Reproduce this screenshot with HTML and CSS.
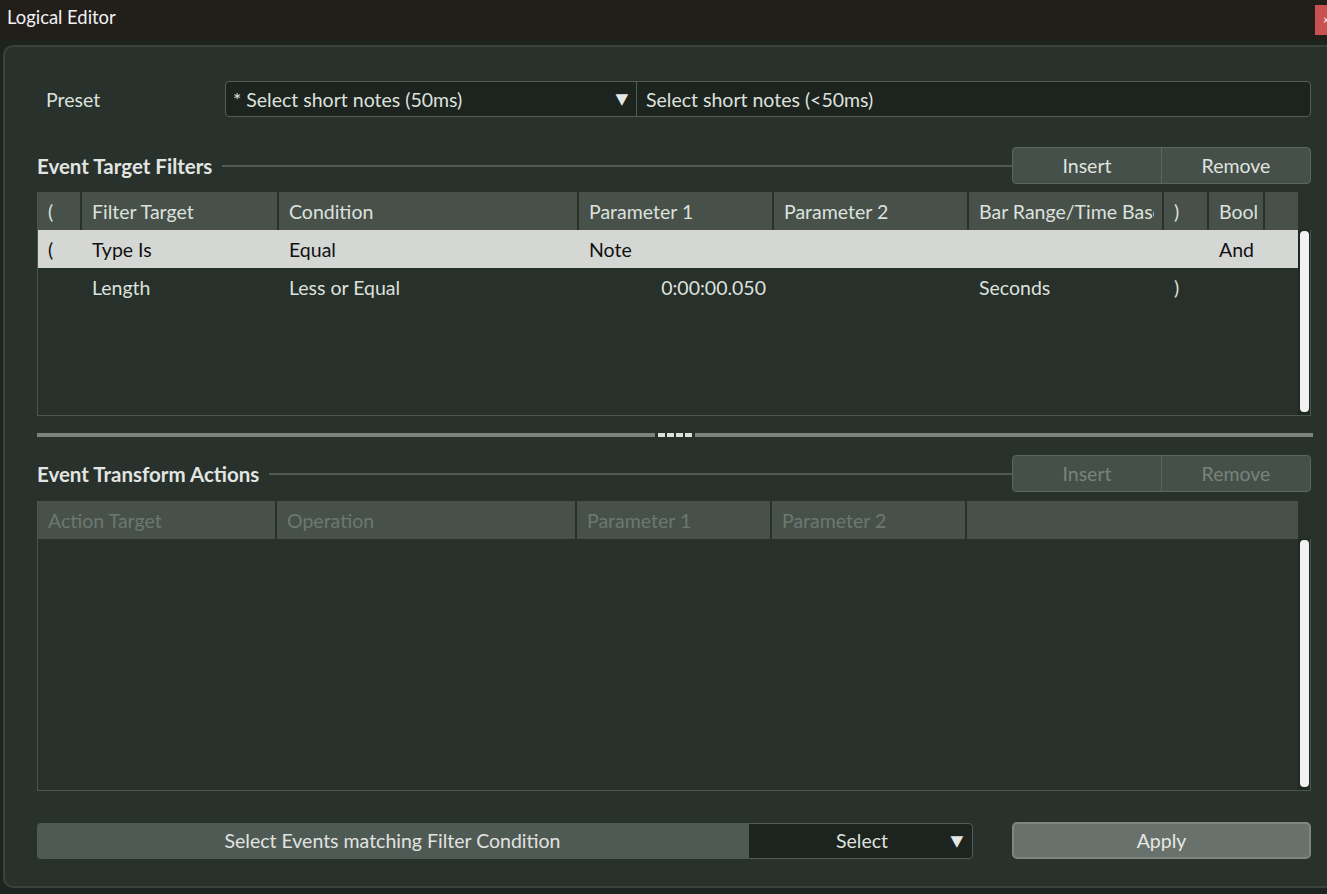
FILE: index.html
```html
<!DOCTYPE html>
<html>
<head>
<meta charset="utf-8">
<title>Logical Editor</title>
<link rel="stylesheet" href="styles.css">
</head>
<body>
<div class="titlebar">
  <span class="title">Logical Editor</span>
  <span class="close">×</span>
</div>
<div class="panel">
  <div class="content">
    <div class="preset-row">
      <span class="preset-label">Preset</span>
      <div class="combo">
        <div class="combo-main"><span>* Select short notes (50ms)</span><span class="arrow">▼</span></div>
        <div class="combo-desc">Select short notes (&lt;50ms)</div>
      </div>
    </div>

    <div class="section-head first">
      <span class="section-title">Event Target Filters</span>
      <span class="section-line"></span>
      <div class="btn-group">
        <span class="btn">Insert</span>
        <span class="btn">Remove</span>
      </div>
    </div>

    <div class="table table-filters">
      <div class="row head">
        <span class="cell">(</span>
        <span class="cell">Filter Target</span>
        <span class="cell">Condition</span>
        <span class="cell">Parameter 1</span>
        <span class="cell">Parameter 2</span>
        <span class="cell">Bar Range/Time Base</span>
        <span class="cell">)</span>
        <span class="cell narrow-clip">Bool</span>
        <span class="cell"></span>
      </div>
      <div class="body">
        <div class="rows">
          <div class="row selected">
            <span class="cell">(</span>
            <span class="cell">Type Is</span>
            <span class="cell">Equal</span>
            <span class="cell">Note</span>
            <span class="cell"></span>
            <span class="cell"></span>
            <span class="cell"></span>
            <span class="cell">And</span>
            <span class="cell"></span>
          </div>
          <div class="row">
            <span class="cell"></span>
            <span class="cell">Length</span>
            <span class="cell">Less or Equal</span>
            <span class="cell right">0:00:00.050</span>
            <span class="cell"></span>
            <span class="cell">Seconds</span>
            <span class="cell">)</span>
            <span class="cell"></span>
            <span class="cell"></span>
          </div>
        </div>
        <div class="scroll"><span class="thumb"></span></div>
      </div>
    </div>

    <div class="splitter">
      <span class="split-bar"></span>
      <span class="grip"><i></i><i></i><i></i><i></i></span>
      <span class="split-bar"></span>
    </div>

    <div class="section-head second">
      <span class="section-title">Event Transform Actions</span>
      <span class="section-line"></span>
      <div class="btn-group disabled">
        <span class="btn">Insert</span>
        <span class="btn">Remove</span>
      </div>
    </div>

    <div class="table table-actions">
      <div class="row head">
        <span class="cell">Action Target</span>
        <span class="cell">Operation</span>
        <span class="cell">Parameter 1</span>
        <span class="cell">Parameter 2</span>
        <span class="cell"></span>
      </div>
      <div class="body">
        <div class="rows"></div>
        <div class="scroll"><span class="thumb"></span></div>
      </div>
    </div>

    <div class="bottom-row">
      <div class="action-combo">
        <span class="action-btn">Select Events matching Filter Condition</span>
        <span class="select-box"><span class="select-text">Select</span><span class="arrow">▼</span></span>
      </div>
      <span class="apply">Apply</span>
    </div>
  </div>
</div>
</body>
</html>
```

FILE: styles.css
```css
* { box-sizing: border-box; }
html, body {
  margin: 0;
  padding: 0;
  width: 1327px;
  height: 894px;
  overflow: hidden;
  background: #1c2420;
  font-family: "Lato", "Noto Sans", sans-serif;
  font-size: 19.5px;
  color: #dde1de;
}
.titlebar {
  height: 40px;
  background: #221f1b;
  display: flex;
  align-items: center;
  justify-content: space-between;
  padding-left: 7px;
}
.title {
  font-size: 18.4px;
  color: #f2f2f2;
  position: relative;
  top: -3px;
}
.close {
  width: 12px;
  height: 30px;
  align-self: flex-start;
  margin-top: 5px;
  background: #c85252;
  color: #fff;
  font-size: 12px;
  line-height: 30px;
  padding-left: 8px;
  white-space: nowrap;
}
.panel {
  margin: 5px 0 0 3px;
  width: 1360px;
  height: 843px;
  border: 2px solid #39423c;
  border-radius: 10px;
  background: #28312b;
  padding: 34px 0 0 32px;
}
.content {
  width: 1275px;
  display: flex;
  flex-direction: column;
}
.preset-row {
  display: flex;
  align-items: center;
  height: 36px;
}
.preset-label {
  width: 188px;
  padding-left: 9px;
  color: #dde1de;
}
.combo {
  display: flex;
  width: 1086px;
  height: 36px;
  border: 1px solid #535c56;
  border-radius: 4px;
  background: #1d231f;
}
.combo-main {
  width: 411px;
  border-right: 1px solid #535c56;
  display: flex;
  align-items: center;
  justify-content: space-between;
  padding: 0 8px 0 7px;
}
.arrow {
  font-family: "DejaVu Sans", sans-serif;
  font-size: 15px;
  color: #e4e7e4;
  transform: scaleX(1.1);
}
.combo-desc {
  flex: 1;
  display: flex;
  align-items: center;
  padding-left: 9px;
}
.section-head {
  display: flex;
  align-items: center;
  height: 37px;
}
.section-head.first { margin-top: 30px; }
.section-head.second { margin-top: 18px; }
.section-title {
  font-weight: 700;
  font-size: 20.5px;
  color: #e2e5e2;
}
.section-line {
  flex: 1;
  height: 2px;
  background: #505a53;
  margin-left: 10px;
}
.btn-group {
  display: flex;
  width: 299px;
  height: 37px;
  border: 1px solid #5b665f;
  border-radius: 4px;
  background: #46504a;
  margin-right: 1px;
}
.btn {
  flex: 1;
  display: flex;
  align-items: center;
  justify-content: center;
  color: #dfe2df;
}
.btn + .btn { border-left: 1px solid #5b665f; }
.btn-group.disabled .btn { color: #78837b; }
.table {
  width: 1274px;
  border: 1px solid #4b554e;
  border-top: none;
  display: flex;
  flex-direction: column;
  background: #27302a;
}
.table-filters { margin-top: 8px; height: 224px; }
.table-actions { margin-top: 9px; height: 290px; }
.row {
  display: grid;
  column-gap: 2px;
  height: 38px;
  align-items: center;
}
.table-filters .row {
  grid-template-columns: 42px 195px 298px 193px 193px 193px 43px 54px 33px;
}
.table-actions .row {
  grid-template-columns: 237px 298px 193px 193px 331px;
}
.row.head {
  background: #27302a;
  width: 1273px;
  padding-right: 12px;
  align-items: stretch;
}
.row.head .cell {
  background: #47514a;
  display: flex;
  align-items: center;
  border-right: 8px solid #47514a;
}
.row.head .cell.narrow-clip { border-right-width: 6px; }
.table-actions .row.head .cell { color: #6d7870; }
.cell {
  padding-left: 10px;
  white-space: nowrap;
  overflow: hidden;
  color: #dde1de;
}
.cell.right { text-align: right; padding-right: 6px; }
.row.selected { background: #d5d7d5; }
.row.selected .cell { color: #111; }
.body {
  flex: 1;
  display: flex;
}
.rows { flex: 1; }
.scroll {
  width: 12px;
  background: #202823;
  padding: 1px 1px 3px 2px;
  display: flex;
}
.thumb {
  flex: 1;
  background: #f2f2f2;
  border-radius: 4px;
}
.splitter {
  margin-top: 17px;
  height: 4px;
  width: 1276px;
  display: flex;
  align-items: stretch;
}
.split-bar { flex: 1; background: #7b837d; }
.grip {
  display: flex;
  gap: 2px;
  padding: 0 3px;
}
.grip i {
  width: 7px;
  height: 4px;
  background: #dcdfdc;
}
.bottom-row {
  margin-top: 31px;
  display: flex;
  align-items: center;
  height: 37px;
}
.action-combo {
  display: flex;
  width: 936px;
  height: 36px;
}
.action-btn {
  width: 711px;
  background: #505a54;
  border-radius: 4px 0 0 4px;
  display: flex;
  align-items: center;
  justify-content: center;
  color: #e0e3e0;
}
.select-box {
  flex: 1;
  background: #1d231f;
  border: 1px solid #535c56;
  border-radius: 0 4px 4px 0;
  display: flex;
  align-items: center;
  justify-content: space-between;
  padding: 0 9px 0 87px;
}
.apply {
  margin-left: 39px;
  width: 299px;
  height: 37px;
  background: #68716b;
  border: 2px solid #7d877f;
  border-radius: 5px;
  display: flex;
  align-items: center;
  justify-content: center;
  color: #e6e8e6;
}
```
